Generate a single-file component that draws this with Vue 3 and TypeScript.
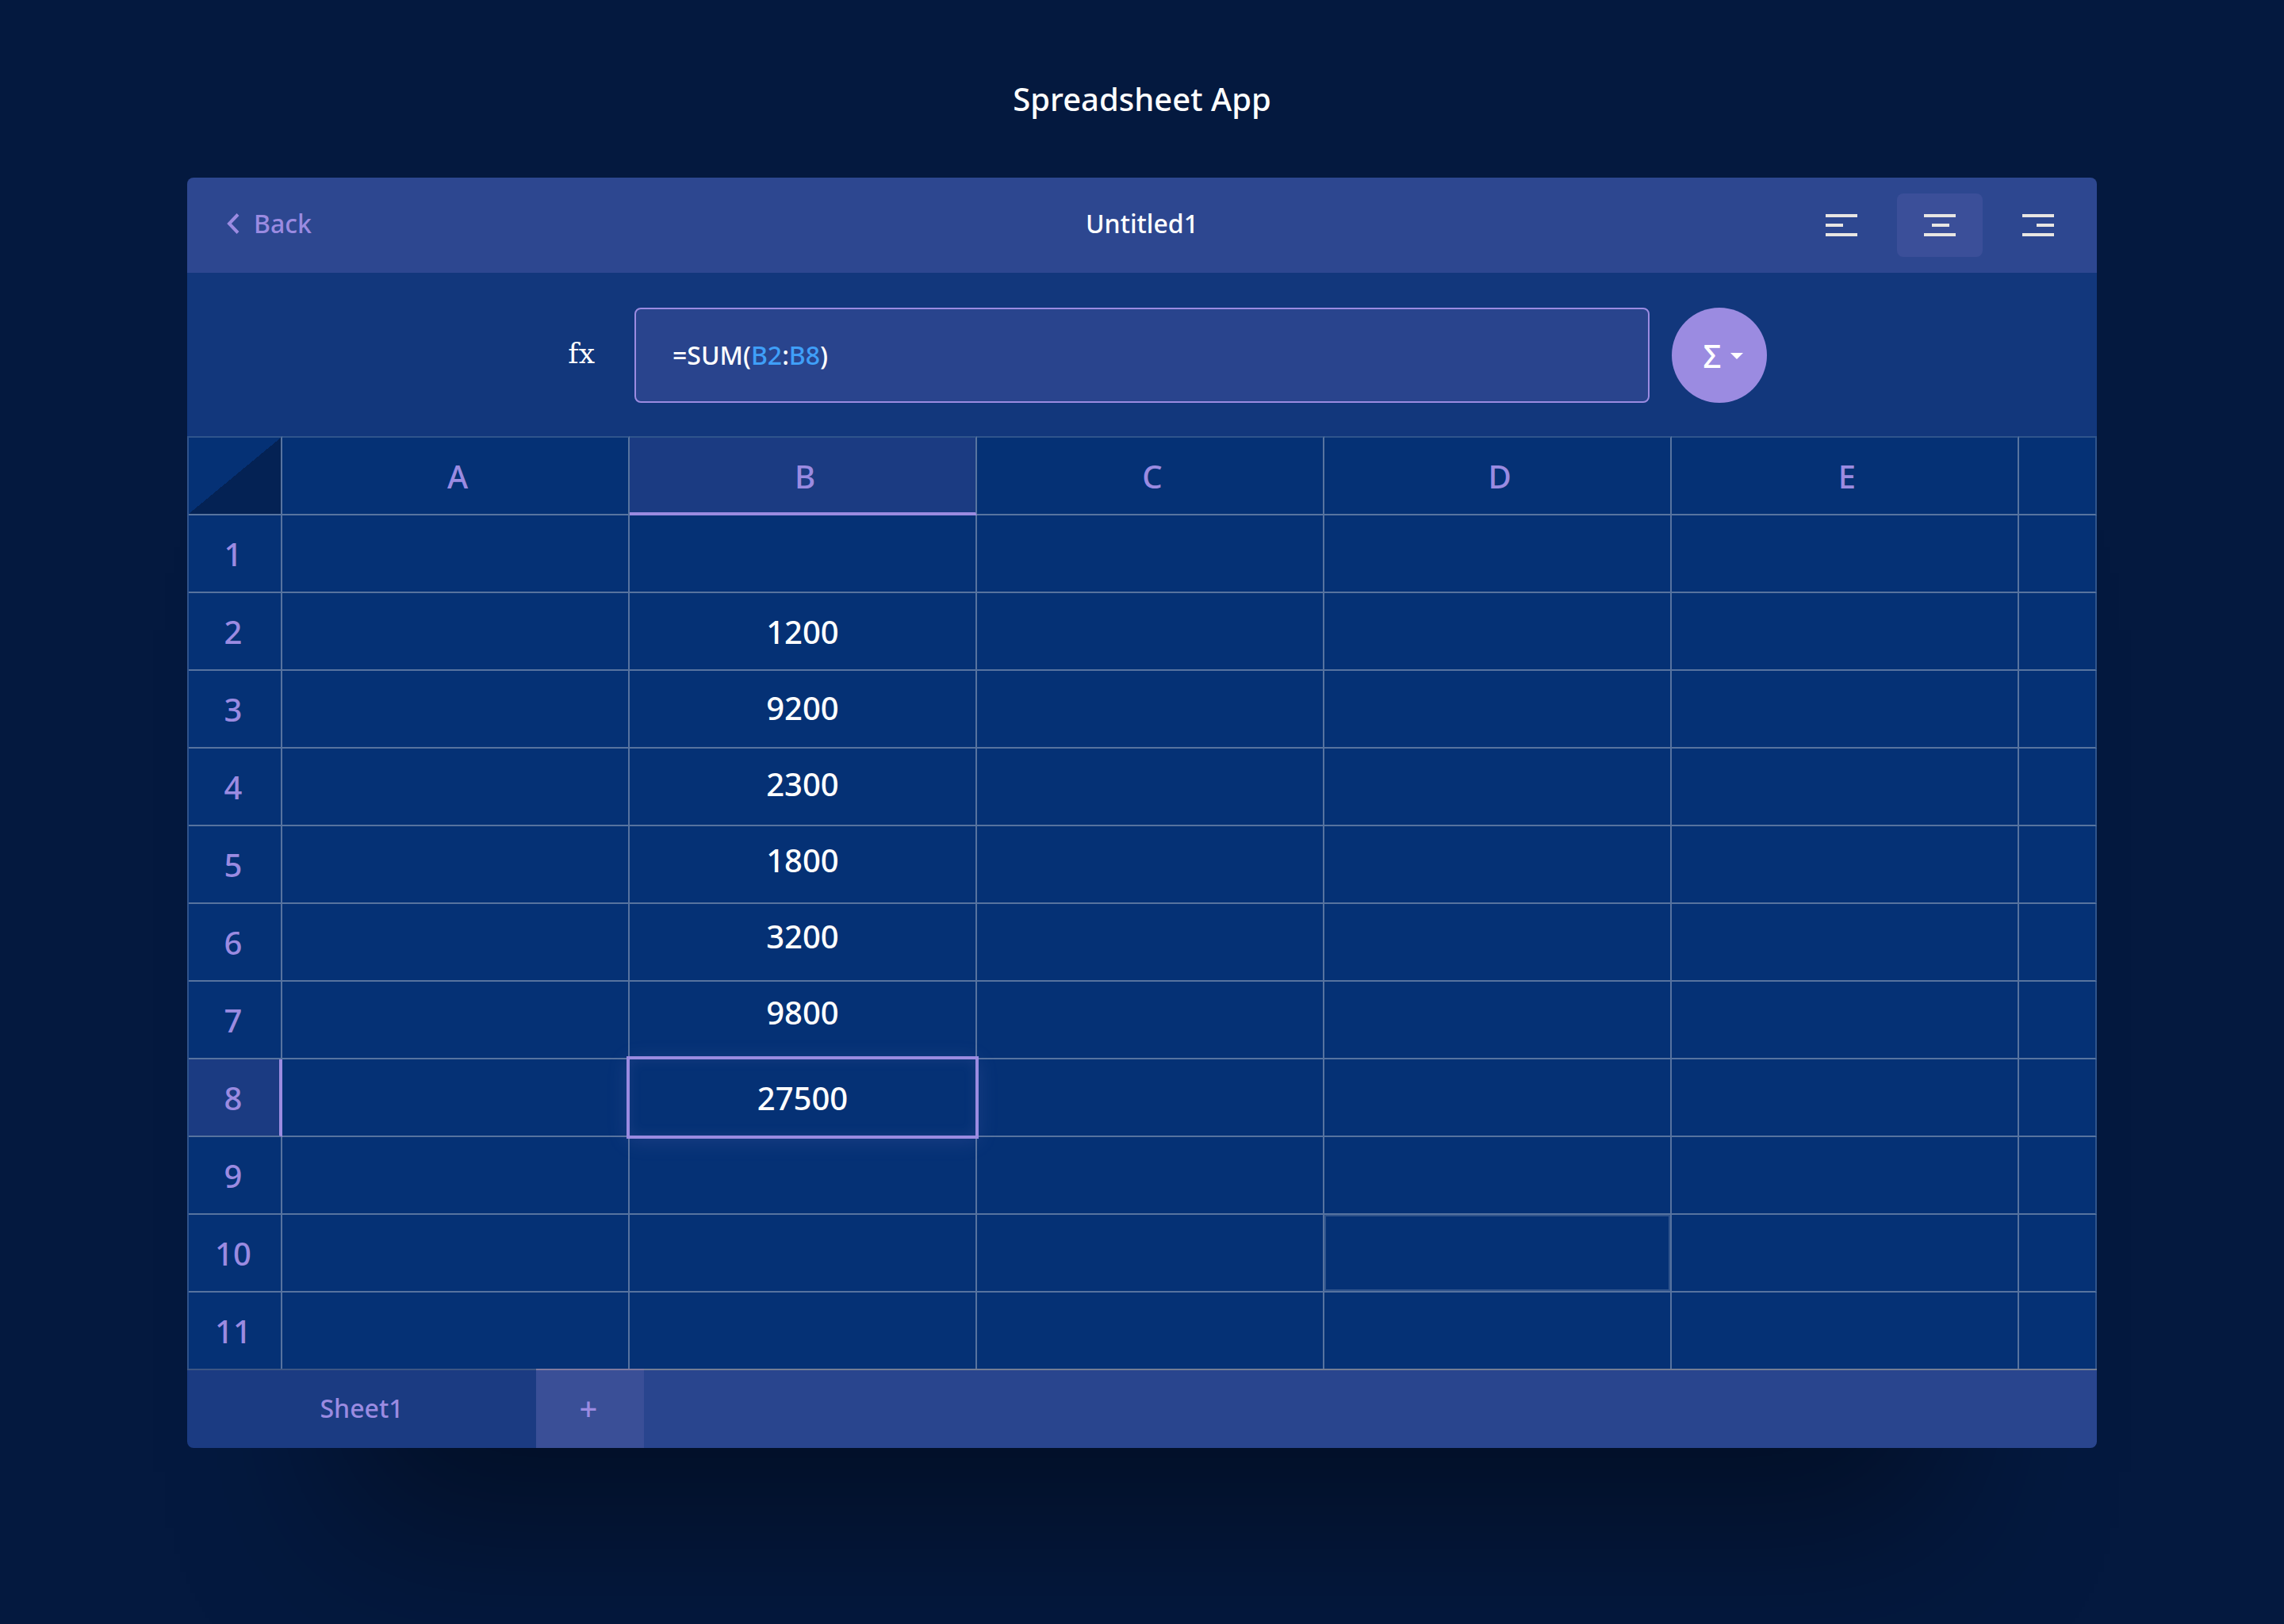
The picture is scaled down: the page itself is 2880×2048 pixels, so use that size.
<script setup lang="ts">
import { computed, ref } from 'vue'

type Align = 'left' | 'center' | 'right'

const columns = ['A', 'B', 'C', 'D', 'E', '']
const rows = Array.from({ length: 11 }, (_, i) => i + 1)

const activeColumn = 'B'
const activeRow = 8
const total = '27500'
const hovered = 'D10'

// Values of the summed range, flowing down from B2.
const runStart = 'B2'
const run = ['1200', '9200', '2300', '1800', '3200', '9800']

const formula = ref('=SUM(B2:B8)')
const tokens = computed(() =>
  formula.value
    .split(/([A-Z]+\d+)/)
    .filter(Boolean)
    .map((text) => ({ text, isRef: /^[A-Z]+\d+$/.test(text) })),
)

const align = ref<Align>('center')
const alignments: { id: Align; label: string; x: number }[] = [
  { id: 'left', label: 'Align left', x: 0 },
  { id: 'center', label: 'Align center', x: 10 },
  { id: 'right', label: 'Align right', x: 18 },
]
</script>

<template>
  <main class="page">
    <h1 class="title">Spreadsheet App</h1>

    <section class="window">
      <header class="toolbar">
        <a class="back" href="#">
          <svg width="16" height="26" viewBox="0 0 16 26" aria-hidden="true">
            <path d="M14 1.500 3 13l11 11.500" fill="none" stroke="currentColor" stroke-width="4" />
          </svg>
          <span>Back</span>
        </a>
        <h2 class="doc-name">Untitled1</h2>
        <div class="aligns">
          <button
            v-for="a in alignments"
            :key="a.id"
            type="button"
            class="align"
            :class="{ on: a.id === align }"
            :aria-label="a.label"
            :aria-pressed="a.id === align"
            @click="align = a.id"
          >
            <svg width="40" height="28" viewBox="0 0 40 28" fill="currentColor" aria-hidden="true">
              <rect width="40" height="4" />
              <rect :x="a.x" y="12" width="22" height="4" />
              <rect y="24" width="40" height="4" />
            </svg>
          </button>
        </div>
      </header>

      <div class="formula-bar">
        <label class="fx" for="formula">fx</label>
        <div class="formula">
          <div class="highlight" aria-hidden="true">
            <span v-for="(t, i) in tokens" :key="i" :class="{ ref: t.isRef }">{{ t.text }}</span>
          </div>
          <input id="formula" v-model="formula" class="formula-input" type="text" spellcheck="false" />
        </div>
        <div class="fn">
          <button type="button" class="sum" aria-label="Insert function">
            <span>Σ</span>
            <svg width="16" height="8" viewBox="0 0 16 8" fill="currentColor" aria-hidden="true">
              <path d="M0 0h16L8 8z" />
            </svg>
          </button>
        </div>
      </div>

      <table class="grid">
        <colgroup>
          <col class="c-num" />
          <col v-for="c in 5" :key="c" class="c-data" />
          <col />
        </colgroup>
        <thead>
          <tr>
            <td class="corner"></td>
            <th v-for="c in columns" :key="c" scope="col" :class="{ active: c === activeColumn }">{{ c }}</th>
          </tr>
        </thead>
        <tbody>
          <tr v-for="r in rows" :key="r">
            <th scope="row" :class="{ active: r === activeRow }">{{ r }}</th>
            <td v-for="c in columns" :key="c" :class="{ hovered: c + r === hovered }">
              <div v-if="c + r === runStart" class="run">
                <div v-for="v in run" :key="v">{{ v }}</div>
              </div>
              <div v-else-if="c === activeColumn && r === activeRow" class="selected">{{ total }}</div>
            </td>
          </tr>
        </tbody>
      </table>

      <footer class="sheets">
        <button type="button" class="sheet">Sheet1</button>
        <button type="button" class="add" aria-label="Add sheet">+</button>
        <div class="rest"></div>
      </footer>
    </section>
  </main>
</template>

<style>
body {
  background: #04193f;
}
</style>

<style scoped>
.page {
  --violet: #9b8be1;
  --line: rgba(255, 252, 246, 0.33);
  --edge: rgba(255, 255, 255, 0.17);
  box-sizing: border-box;
  min-height: 100vh;
  padding: 96px 236px 222px;
  overflow: hidden;
  background: #04193f;
  color: #fff;
  font: 500 32px/44px 'Noto Sans', sans-serif;
}
.page * {
  box-sizing: border-box;
}
button,
input {
  margin: 0;
  padding: 0;
  border: 0;
  background: none;
  color: inherit;
  font: inherit;
}
.title {
  margin: 0;
  padding: 1px 0 71px;
  font-size: 40px;
  font-weight: 500;
  line-height: 56px;
  text-align: center;
}
.window {
  border-radius: 8px;
  box-shadow: 0 300px 200px -200px rgba(0, 0, 0, 0.4);
}

.toolbar {
  display: grid;
  grid-template-columns: 1fr auto 1fr;
  align-items: center;
  height: 120px;
  padding: 0 20px;
  border-radius: 8px 8px 0 0;
  background: #2d4790;
}
.back {
  display: flex;
  align-items: center;
  gap: 18px;
  padding: 0 0 4px 30px;
  color: var(--violet);
  text-decoration: none;
}
.doc-name {
  margin: 0;
  padding-bottom: 4px;
  font-size: 32px;
  font-weight: 500;
}
.aligns {
  display: flex;
  justify-content: flex-end;
  gap: 16px;
}
.align {
  display: grid;
  place-items: center;
  width: 108px;
  height: 80px;
  border-radius: 8px;
  color: #e8e6e3;
}
.align.on {
  background: #3b4f99;
}

.formula-bar {
  display: grid;
  grid-template-columns: 1fr minmax(0, 1280px) 1fr;
  align-items: center;
  padding: 44px 0 42px;
  background: #12377c;
}
.fx {
  padding: 0 50px 4px 0;
  font: 36px/44px 'DejaVu Serif', serif;
  text-align: right;
}
.formula {
  position: relative;
  height: 120px;
  border: 2px solid var(--violet);
  border-radius: 8px;
  background: #29448d;
}
.highlight,
.formula-input {
  width: 100%;
  height: 100%;
  padding: 0 46px;
  line-height: 116px;
}
.highlight {
  white-space: pre;
}
.ref {
  color: #3f9ff8;
}
.formula-input {
  position: absolute;
  inset: 0;
  color: transparent;
  caret-color: #fff;
  outline: none;
}
.fn {
  padding-left: 28px;
}
.sum {
  display: flex;
  align-items: center;
  justify-content: center;
  gap: 12px;
  width: 120px;
  height: 120px;
  padding: 2px 0 0 10px;
  border-radius: 50%;
  background: var(--violet);
  font-size: 40px;
}

.grid {
  width: 100%;
  table-layout: fixed;
  border-spacing: 0;
  border-left: 2px solid var(--edge);
  background: #053175;
  font-size: 40px;
}
.c-num {
  width: 118px;
}
.c-data {
  width: 438px;
}
.grid th,
.grid td {
  position: relative;
  height: 98px;
  padding: 0;
  border: 0 solid var(--line);
  border-width: 0 2px 2px 0;
  background-clip: padding-box;
  font-weight: 500;
  text-align: center;
}
.grid th:last-child,
.grid td:last-child {
  border-right-color: var(--edge);
}
.grid tbody tr:last-child > * {
  height: 96px;
  border-bottom: 0;
}
.grid thead th,
.grid thead td {
  height: 100px;
  border-top: 2px solid var(--edge);
}
.grid th {
  color: var(--violet);
}
.grid thead th {
  padding: 2px 0 0 6px;
}
.grid tbody th {
  padding: 2px 4px 0 0;
}
.grid .corner {
  background: linear-gradient(to bottom right, transparent 50%, #042254 50%) padding-box;
}
.grid th.active {
  background: #1b3b82 padding-box;
}
.grid thead th.active {
  padding-top: 4px;
  border-bottom: 4px solid var(--violet);
}
.grid tbody th.active {
  padding-right: 2px;
  border-right: 4px solid var(--violet);
}
.run {
  position: absolute;
  top: 0;
  left: 0;
  width: 100%;
  padding-top: 1px;
  line-height: 96px;
}
.selected {
  position: absolute;
  z-index: 1;
  inset: -4px;
  padding-top: 1px;
  border: 4px solid var(--violet);
  box-shadow:
    0 4px 24px rgba(155, 139, 225, 0.14),
    inset 0 0 16px rgba(155, 139, 225, 0.12);
  line-height: 96px;
}
.hovered {
  box-shadow: inset 0 0 0 2px var(--edge);
}

.sheets {
  display: flex;
  height: 100px;
  border-radius: 0 0 8px 8px;
  overflow: hidden;
  color: var(--violet);
}
.sheets button {
  padding-bottom: 2px;
}
.sheet {
  width: 440px;
  border-top: 2px solid #3d5684;
  background: #1b3b82;
}
.sheets .add {
  width: 136px;
  padding-right: 4px;
  border-top: 2px solid #7f7a9f;
  background: #3a4f97;
  font-size: 40px;
}
.rest {
  flex: 1;
  border-top: 2px solid #747d94;
  background: #29458e;
}
</style>
